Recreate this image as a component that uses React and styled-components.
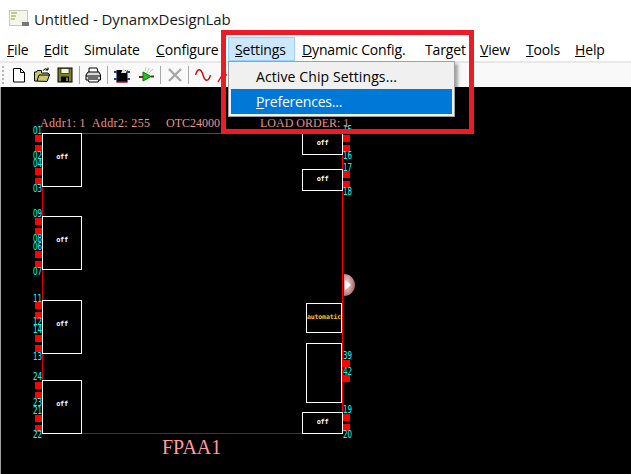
import React from "react";
import styled, { createGlobalStyle } from "styled-components";

const CANVAS_TOP = 87;

const GlobalStyle = createGlobalStyle`
  html, body {
    margin: 0;
    padding: 0;
    height: 100%;
    overflow: hidden;
    background: #fff;
  }
  #root {
    height: 100%;
  }
`;

const Window = styled.div`
  position: relative;
  width: 631px;
  height: 474px;
  display: flex;
  flex-direction: column;
  overflow: hidden;
  font-family: "Open Sans", "Noto Sans", sans-serif;
  color: #000;
`;

const TitleBar = styled.div`
  height: 37px;
  display: flex;
  align-items: center;
  gap: 5px;
  padding: 0 0 0 9px;
  font-size: 15px;
  letter-spacing: -0.1px;
  color: #1a1a1a;
`;

const MenuBar = styled.div`
  height: 24px;
  display: flex;
  font-size: 14px;
  letter-spacing: -0.15px;
`;

const MenuItem = styled.div`
  position: relative;
  box-sizing: border-box;
  width: ${(p) => p.$width}px;
  height: 24px;
  padding-left: 6px;
  line-height: 24px;
  white-space: nowrap;
  border: 1px solid ${(p) => (p.$open ? "#99d1ff" : "transparent")};
  background: ${(p) => (p.$open ? "#cce8ff" : "transparent")};
`;

const Dropdown = styled.div`
  position: absolute;
  z-index: 3;
  left: -1px;
  top: 23px;
  box-sizing: border-box;
  width: 227px;
  height: 56px;
  padding: 2px;
  background: #f0f0f0;
  border: 1px solid #a0a0a0;
  box-shadow: 3px 3px 3px rgba(0, 0, 0, 0.35);
`;

const DropdownRow = styled.div`
  height: 25px;
  padding-left: 25px;
  line-height: 25px;
  letter-spacing: ${(p) => (p.$active ? "-0.2px" : "0.1px")};
  background: ${(p) => (p.$active ? "#0078d7" : "transparent")};
  color: ${(p) => (p.$active ? "#fff" : "#000")};
`;

const Toolbar = styled.div`
  height: 26px;
  box-sizing: border-box;
  display: flex;
  align-items: center;
  padding-left: 2px;
  background: #f9f9f9;
  border-top: 2px solid #e8e8e8;
`;

const Gripper = styled.div`
  width: 2px;
  height: 18px;
  margin-right: 9px;
  background: repeating-linear-gradient(to bottom, #b4b4b4 0 2px, transparent 2px 4px);
`;

const ToolIcon = styled.svg`
  width: ${(p) => p.$w || 16}px;
  height: 16px;
  margin-left: ${(p) => p.$gap || 0}px;
  flex: none;
`;

const ToolSeparator = styled.div`
  width: 1px;
  height: 18px;
  margin-left: ${(p) => p.$gap}px;
  background: #a8a8a8;
`;

const Canvas = styled.div`
  position: relative;
  flex: 1;
  background: #000;
  border-left: 1px solid #a0a0a0;
  overflow: hidden;
`;

const CanvasText = styled.span`
  position: absolute;
  left: ${(p) => p.$x - 1}px;
  top: ${(p) => p.$y - CANVAS_TOP}px;
  font-family: "Liberation Serif", serif;
  font-size: ${(p) => p.$size || 12}px;
  line-height: 1;
  letter-spacing: ${(p) => p.$spacing || 0}px;
  white-space: nowrap;
  color: ${(p) => p.$color || "#ee9488"};
`;

const Wire = styled.div`
  position: absolute;
  left: ${(p) => p.$x - 1}px;
  top: ${(p) => p.$y - CANVAS_TOP}px;
  width: ${(p) => p.$w}px;
  height: ${(p) => p.$h}px;
  background: ${(p) => p.$color || "#ff0000"};
`;

const Pin = styled.div`
  position: absolute;
  left: ${(p) => p.$x - 1}px;
  top: ${(p) => p.$y - CANVAS_TOP}px;
  width: 7px;
  height: 7px;
  background: #ff0000;
`;

const PinLabel = styled.span`
  position: absolute;
  z-index: 1;
  left: ${(p) => p.$x - 1}px;
  top: ${(p) => p.$y - CANVAS_TOP - 4}px;
  font-family: "DejaVu Sans", sans-serif;
  font-size: 10px;
  line-height: 8px;
  transform: scaleX(0.72);
  transform-origin: left center;
  color: #00ffff;
`;

const Block = styled.div`
  position: absolute;
  z-index: 1;
  box-sizing: border-box;
  left: ${(p) => p.$x - 1}px;
  top: ${(p) => p.$y - CANVAS_TOP}px;
  width: ${(p) => p.$w}px;
  height: ${(p) => p.$h}px;
  padding-bottom: ${(p) => (p.$h > 40 ? 6 : 2)}px;
  display: flex;
  align-items: center;
  justify-content: center;
  background: #000;
  border: 1px solid #fff;
  font-family: "DejaVu Sans Mono", monospace;
  font-size: ${(p) => (p.$auto ? 6.5 : 7)}px;
  font-weight: 700;
  letter-spacing: ${(p) => (p.$auto ? -0.15 : -0.3)}px;
  color: ${(p) => (p.$auto ? "#ffc21c" : "#fff")};
`;

const Knob = styled.svg`
  position: absolute;
  z-index: 1;
  left: 342px;
  top: ${273 - CANVAS_TOP}px;
  width: 14px;
  height: 24px;
`;

const Callout = styled.div`
  position: absolute;
  z-index: 4;
  left: 221px;
  top: 30px;
  box-sizing: border-box;
  width: 253px;
  height: 104px;
  border: 5px solid #ed1c24;
  pointer-events: none;
`;

const menus = [
  { label: "File", key: "F", rest: "ile", width: 37 },
  { label: "Edit", key: "E", rest: "dit", width: 40 },
  { label: "Simulate", rest: "Simulate", width: 72 },
  { label: "Configure", key: "C", rest: "onfigure", width: 79 },
  { label: "Settings", key: "S", rest: "ettings", width: 67, open: true },
  { label: "Dynamic Config.", key: "D", rest: "ynamic Config.", width: 123 },
  { label: "Target", rest: "Target", width: 55 },
  { label: "View", key: "V", rest: "iew", width: 46 },
  { label: "Tools", key: "T", rest: "ools", width: 49 },
  { label: "Help", key: "H", rest: "elp", width: 47 },
];

const leftPins = [135, 145, 168, 178, 218, 228, 251, 261, 302, 312, 335, 345, 382, 392, 415, 425];
const rightPins = [135, 145, 171, 181, 360, 375, 414, 424];

const leftLabels = [
  ["01", 131], ["02", 156], ["04", 164], ["03", 189],
  ["09", 214], ["08", 239], ["06", 247], ["07", 272],
  ["11", 299], ["12", 322], ["14", 330], ["13", 357],
  ["24", 377], ["23", 403], ["21", 411], ["22", 435],
];
const rightLabels = [
  ["15", 130], ["16", 156], ["17", 168], ["18", 192],
  ["39", 356], ["42", 372], ["19", 410], ["20", 435],
];

const blocks = [
  { x: 42, y: 133, w: 40, h: 54, text: "off" },
  { x: 42, y: 216, w: 40, h: 54, text: "off" },
  { x: 42, y: 300, w: 40, h: 54, text: "off" },
  { x: 42, y: 380, w: 40, h: 54, text: "off" },
  { x: 302, y: 133, w: 41, h: 22, text: "off" },
  { x: 302, y: 169, w: 41, h: 22, text: "off" },
  { x: 306, y: 303, w: 36, h: 30, text: "automatic", auto: true },
  { x: 306, y: 343, w: 36, h: 60, text: "" },
  { x: 302, y: 412, w: 41, h: 22, text: "off" },
];

const AppIcon = () => (
  <svg width="20" height="17" viewBox="0 0 20 17">
    <rect x="0.5" y="0.5" width="18" height="15" fill="#f4f6ec" stroke="#c8c8c0" />
    <path d="M2 3h6M2 6h5M2 9h4" stroke="#a9bf6a" strokeWidth="1.4" />
    <rect x="13" y="12" width="7" height="4" fill="#777" />
  </svg>
);

const App = () => (
  <Window>
    <GlobalStyle />
    <TitleBar>
      <AppIcon />
      <span>Untitled - DynamxDesignLab</span>
    </TitleBar>
    <MenuBar>
      {menus.map((m) => (
        <MenuItem key={m.label} $width={m.width} $open={m.open}>
          {m.key ? <u>{m.key}</u> : null}
          {m.rest}
          {m.open ? (
            <Dropdown>
              <DropdownRow>Active Chip Settings...</DropdownRow>
              <DropdownRow $active>
                <u>P</u>references...
              </DropdownRow>
            </Dropdown>
          ) : null}
        </MenuItem>
      ))}
    </MenuBar>
    <Toolbar>
      <Gripper />
      <ToolIcon viewBox="0 0 12 16" $w={12}>
        <path d="M0.5 1.5h7l4 4v9.5h-11z M7.5 1.5v4h4" fill="#fff" stroke="#000" />
      </ToolIcon>
      <ToolIcon viewBox="0 0 16 16" $gap={9}>
        <path d="M0.5 14V5h2l1-1.5h4V6h6.5L15.5 8l-2.5 6.5z" fill="#c9c96a" stroke="#000" />
        <path d="M3 14l2-6h10.5" fill="none" stroke="#000" />
        <path d="M9 3.5Q11 0.5 14 2.5M14 0.5v2.5h-2.5" fill="none" stroke="#000" />
      </ToolIcon>
      <ToolIcon viewBox="0 0 16 16" $gap={7}>
        <rect x="1" y="1" width="14" height="14" fill="#80801e" stroke="#000" />
        <rect x="4" y="1.5" width="8" height="5" fill="#f4f4e0" stroke="#000" strokeWidth="0.6" />
        <rect x="4" y="9.5" width="8" height="5.5" fill="#000" />
        <rect x="9" y="10.5" width="2" height="3.5" fill="#80801e" />
      </ToolIcon>
      <ToolSeparator $gap={6} />
      <ToolIcon viewBox="0 0 16 16" $gap={5}>
        <path d="M4 5V1h8l1 4" fill="#fff" stroke="#000" />
        <path d="M1 8l2-3h11l1.5 3v5H1z" fill="#d8d8d8" stroke="#000" />
        <path d="M1 9h14.5M3 11h10" stroke="#000" />
        <path d="M3 13l1 2h9l1-2" fill="#fff" stroke="#000" />
      </ToolIcon>
      <ToolSeparator $gap={6} />
      <ToolIcon viewBox="0 0 16 16" $gap={6}>
        <rect x="2.5" y="3" width="11" height="12" fill="#000" />
        <path d="M7 6l3-6 1 4 3-3-2 5z" fill="#e8e8e8" />
        <path d="M0 5h3M0 12h3M13 12h3M13 5h3" stroke="#1c3fb0" strokeWidth="2" />
        <path d="M2.5 15h11" stroke="#8a1a1a" strokeWidth="1.5" />
      </ToolIcon>
      <ToolIcon viewBox="0 0 16 16" $gap={8}>
        <path d="M5 5v9l8-4.5z" fill="#18c818" stroke="#0a700a" />
        <path d="M1 10h4M13 9.5h3" stroke="#8a1a1a" strokeWidth="2" />
        <path d="M9 6l2-5M11 6l4-4M7 4l1-4" stroke="#c8c8c8" />
      </ToolIcon>
      <ToolSeparator $gap={6} />
      <ToolIcon viewBox="0 0 16 16" $gap={6}>
        <path d="M2 2l12 12M14 2L2 14" stroke="#a8a8a8" strokeWidth="2.4" />
      </ToolIcon>
      <ToolSeparator $gap={5} />
      <ToolIcon viewBox="0 0 16 16" $gap={6}>
        <path d="M0.5 8C2.5 1 6 1 8 8s5.5 7 7.5 0" fill="none" stroke="#e00000" strokeWidth="1.4" />
      </ToolIcon>
      <ToolIcon viewBox="0 0 16 16" $gap={6}>
        <path d="M1 15L7 5M4 8h6" fill="none" stroke="#e00000" strokeWidth="1.4" />
      </ToolIcon>
    </Toolbar>
    <Canvas>
      <CanvasText $x={40} $y={117} $spacing={0.35}>Addr1: 1&nbsp; Addr2: 255</CanvasText>
      <CanvasText $x={166} $y={117}>OTC24000</CanvasText>
      <CanvasText $x={260} $y={117}>LOAD ORDER: 1</CanvasText>

      <Wire $x={42} $y={133} $w={300} $h={1} />
      <Wire $x={42} $y={433} $w={300} $h={1} $color="#c00000" />
      <Wire $x={42} $y={133} $w={1} $h={300} $color="#d80000" />
      <Wire $x={342} $y={133} $w={1} $h={300} />

      {leftPins.map((y) => (
        <Pin key={y} $x={35} $y={y} />
      ))}
      {rightPins.map((y) => (
        <Pin key={y} $x={343} $y={y} />
      ))}
      {leftLabels.map(([text, y]) => (
        <PinLabel key={text} $x={33} $y={y}>{text}</PinLabel>
      ))}
      {rightLabels.map(([text, y]) => (
        <PinLabel key={text} $x={343} $y={y}>{text}</PinLabel>
      ))}
      {blocks.map((b) => (
        <Block key={`${b.x}-${b.y}`} $x={b.x} $y={b.y} $w={b.w} $h={b.h} $auto={b.auto}>
          {b.text}
        </Block>
      ))}

      <Knob viewBox="0 0 14 24">
        <defs>
          <radialGradient id="knobFill" cx="0.3" cy="0.45" r="0.9">
            <stop offset="0" stopColor="#f3d8d8" />
            <stop offset="0.6" stopColor="#b97a7a" />
            <stop offset="1" stopColor="#6d3c3c" />
          </radialGradient>
        </defs>
        <path d="M1 1a11 11 0 0 1 0 22z" fill="url(#knobFill)" />
        <path d="M2 7l6 5-6 5z" fill="#fff" />
      </Knob>

      <CanvasText $x={162} $y={437} $size={20} $color="#ff9c9c">FPAA1</CanvasText>
    </Canvas>
    <Callout />
  </Window>
);

export default App;
